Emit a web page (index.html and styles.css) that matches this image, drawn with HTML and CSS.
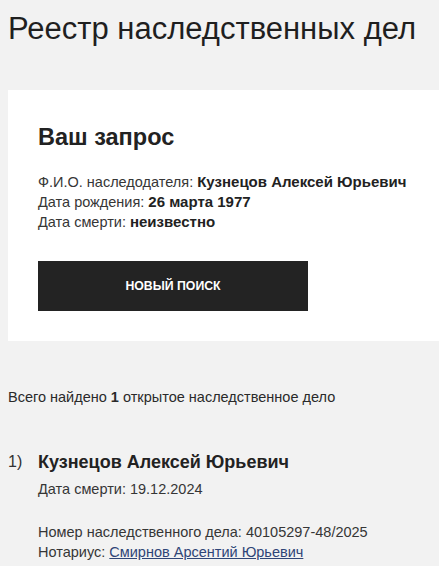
FILE: index.html
```html
<!DOCTYPE html>
<html lang="ru">
<head>
<meta charset="utf-8">
<title>Реестр наследственных дел</title>
<link rel="stylesheet" href="styles.css">
</head>
<body>
<div class="page">
  <h1 class="title">Реестр наследственных дел</h1>
  <section class="card">
    <h2 class="card-title">Ваш запрос</h2>
    <div class="query">
      <div>Ф.И.О. наследодателя: <b>Кузнецов Алексей Юрьевич</b></div>
      <div>Дата рождения: <b>26 марта 1977</b></div>
      <div>Дата смерти: <b>неизвестно</b></div>
    </div>
    <button class="btn" type="button">НОВЫЙ ПОИСК</button>
  </section>
  <p class="summary">Всего найдено <b>1</b> открытое наследственное дело</p>
  <div class="item">
    <div class="num">1)</div>
    <div class="body">
      <div class="name">Кузнецов Алексей Юрьевич</div>
      <div class="line">Дата смерти: 19.12.2024</div>
      <div class="details">
        <div>Номер наследственного дела: 40105297-48/2025</div>
        <div>Нотариус: <a class="link" href="#">Смирнов Арсентий Юрьевич</a></div>
      </div>
    </div>
  </div>
</div>
</body>
</html>
```
FILE: styles.css
```css
html, body {
  margin: 0;
  padding: 0;
  background: #f2f2f2;
}
body {
  font-family: "Liberation Sans", Arial, sans-serif;
  color: #222;
}
.page {
  padding-left: 8px;
}
.title {
  margin: 11px 0 0;
  font-size: 31px;
  line-height: 36px;
  font-weight: normal;
  color: #1f1f1f;
}
.card {
  margin-top: 43px;
  background: #fff;
  padding: 33px 30px 30px;
  height: 251px;
  box-sizing: border-box;
}
.card-title {
  margin: 0;
  font-size: 23.5px;
  line-height: 29px;
  font-weight: bold;
  color: #222;
}
.query {
  margin-top: 20px;
  font-size: 14.5px;
  line-height: 20px;
  color: #363636;
}
.query b {
  font-size: 15px;
  color: #222;
}
.btn {
  display: flex;
  align-items: center;
  justify-content: center;
  margin-top: 29px;
  width: 270px;
  height: 50px;
  border: 0;
  background: #232323;
  color: #fff;
  font-family: "Liberation Sans", Arial, sans-serif;
  font-weight: bold;
  font-size: 12.3px;
  padding: 0;
}
.summary {
  margin: 46px 0 0;
  font-size: 14.5px;
  line-height: 20px;
  color: #2a2a2a;
}
.item {
  margin-top: 43px;
  display: grid;
  grid-template-columns: 30px 1fr;
}
.num {
  font-size: 16px;
  line-height: 24px;
  color: #333;
}
.name {
  font-size: 18px;
  line-height: 24px;
  font-weight: bold;
  color: #222;
}
.line {
  margin-top: 5px;
  font-size: 14.5px;
  line-height: 20px;
  color: #363636;
}
.details {
  margin-top: 23px;
  font-size: 14.5px;
  line-height: 20px;
  color: #363636;
}
.link {
  color: #2f4577;
  text-decoration: underline;
}
```
